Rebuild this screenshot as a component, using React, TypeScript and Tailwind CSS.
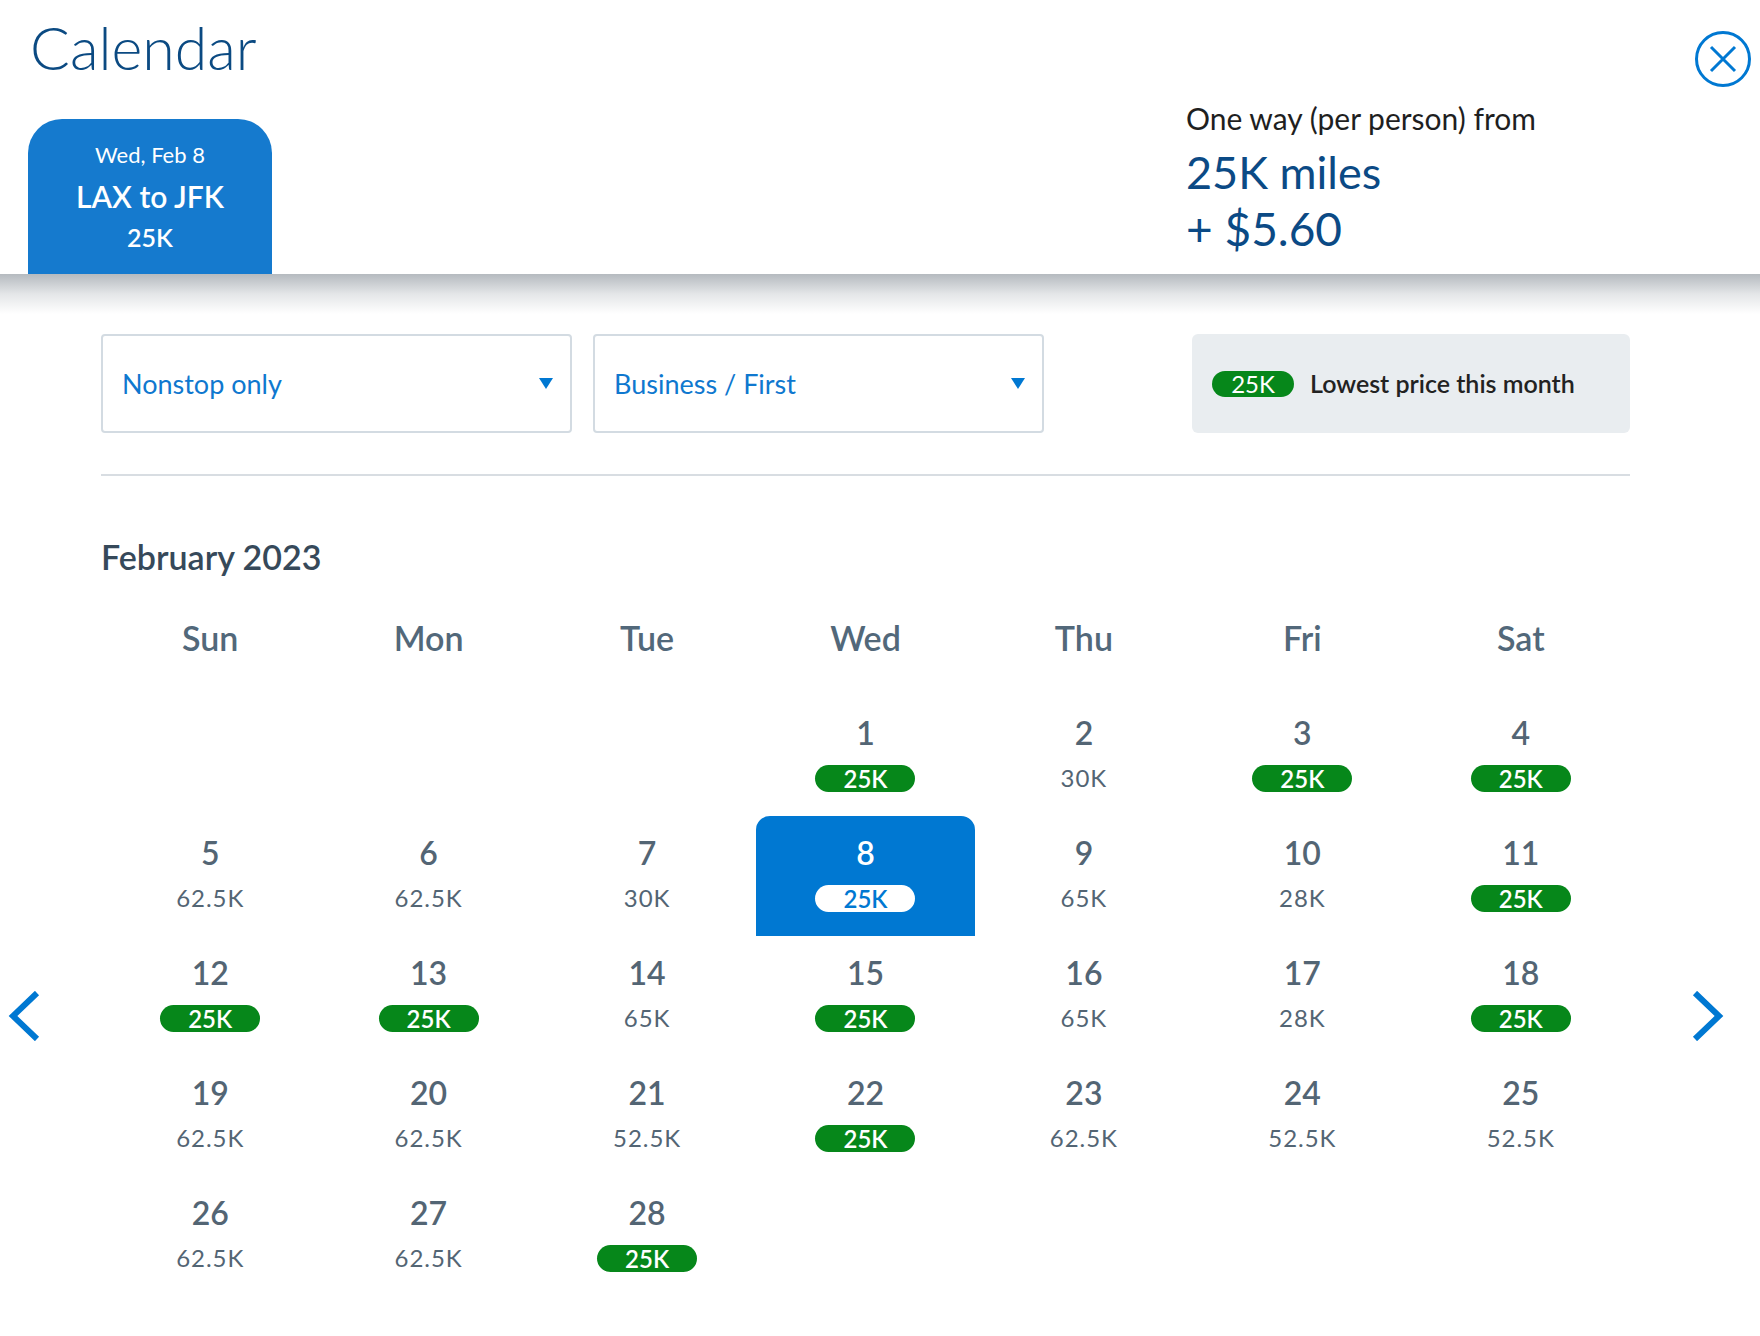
import React from "react"

type Day = { d: number; price: string; low?: boolean; selected?: boolean } | null

const weekdays = ["Sun", "Mon", "Tue", "Wed", "Thu", "Fri", "Sat"]

const days: Day[] = [
  null,
  null,
  null,
  { d: 1, price: "25K", low: true },
  { d: 2, price: "30K" },
  { d: 3, price: "25K", low: true },
  { d: 4, price: "25K", low: true },
  { d: 5, price: "62.5K" },
  { d: 6, price: "62.5K" },
  { d: 7, price: "30K" },
  { d: 8, price: "25K", low: true, selected: true },
  { d: 9, price: "65K" },
  { d: 10, price: "28K" },
  { d: 11, price: "25K", low: true },
  { d: 12, price: "25K", low: true },
  { d: 13, price: "25K", low: true },
  { d: 14, price: "65K" },
  { d: 15, price: "25K", low: true },
  { d: 16, price: "65K" },
  { d: 17, price: "28K" },
  { d: 18, price: "25K", low: true },
  { d: 19, price: "62.5K" },
  { d: 20, price: "62.5K" },
  { d: 21, price: "52.5K" },
  { d: 22, price: "25K", low: true },
  { d: 23, price: "62.5K" },
  { d: 24, price: "52.5K" },
  { d: 25, price: "52.5K" },
  { d: 26, price: "62.5K" },
  { d: 27, price: "62.5K" },
  { d: 28, price: "25K", low: true },
]

function Caret() {
  return (
    <svg width="14" height="11" viewBox="0 0 14 11" className="shrink-0">
      <path d="M0 0H14L7 11Z" fill="#0078d2" />
    </svg>
  )
}

function Select({ label, width }: { label: string; width: string }) {
  return (
    <div
      className={`flex h-[99px] items-center justify-between rounded-[4px] border-2 border-[#d3dbe2] pl-[19px] pr-[17px] ${width}`}
    >
      <span className="text-[27px] leading-[34px] text-[#0f78cf]">{label}</span>
      <Caret />
    </div>
  )
}

function Chevron({ dir }: { dir: "left" | "right" }) {
  return (
    <svg width="32" height="50" viewBox="0 0 32 50" fill="none">
      <path
        d={dir === "left" ? "M29 2L5 25L29 48" : "M3 2L27 25L3 48"}
        stroke="#0078d2"
        strokeWidth="6"
      />
    </svg>
  )
}

function Cell({ day }: { day: Day }) {
  if (!day) return <div className="h-[120px]" />
  const sel = day.selected
  return (
    <div
      className={`flex h-[120px] flex-col items-center pt-[17px] ${sel ? "rounded-t-[14px] bg-[#0078d2]" : ""}`}
    >
      <span
        className={`text-[32px] leading-[40px] font-semibold ${sel ? "text-white" : "text-[#536574]"}`}
      >
        {day.d}
      </span>
      {day.low ? (
        <span
          className={`mt-[12px] flex h-[27px] w-[100px] items-center justify-center rounded-full text-[24px] font-semibold leading-none ${
            sel ? "bg-white text-[#0078d2]" : "bg-[#06871a] text-white"
          }`}
        >
          {day.price}
        </span>
      ) : (
        <span className="mt-[11px] flex h-[27px] items-center text-[24px] tracking-[0.04em] text-[#536574]">
          {day.price}
        </span>
      )}
    </div>
  )
}

export default function App() {
  return (
    <div className="h-[1336px] w-[1760px] overflow-hidden bg-white font-['Lato',sans-serif]">
      {/* Header */}
      <header className="flex h-[274px]">
        <div className="flex flex-col pl-[28px] pt-[18px]">
          <h1 className="pl-[2px] text-[59px] font-light leading-[60px] text-[#0b4a82]">Calendar</h1>
          <div className="mt-[41px] flex h-[155px] w-[244px] flex-col items-center rounded-t-[34px] bg-[#157ace] pt-[22px] text-white">
            <span className="text-[22px] leading-[28px]">Wed, Feb 8</span>
            <span className="mt-[9px] text-[30px] font-semibold leading-[36px]">LAX to JFK</span>
            <span className="mt-[8px] text-[25px] font-semibold leading-[30px]">25K</span>
          </div>
        </div>
        <div className="ml-auto flex w-[509px] flex-col pt-[101px]">
          <span className="text-[30px] leading-[34px] text-[#1f1f1f]">One way (per person) from</span>
          <span className="mt-[10px] text-[45px] leading-[54px] text-[#0b4a85]">25K miles</span>
          <span className="mt-[3px] text-[46px] leading-[54px] text-[#0b4a85]">+ $5.60</span>
        </div>
        <div className="mr-[9px] pt-[31px]">
          <button
            type="button"
            className="flex size-[56px] items-center justify-center rounded-full border-[3px] border-[#0078d2]"
          >
            <svg width="28" height="28" viewBox="0 0 28 28">
              <path d="M2 2L26 26M26 2L2 26" stroke="#0078d2" strokeWidth="3" />
            </svg>
          </button>
        </div>
      </header>
      <div className="h-[40px] bg-gradient-to-b from-[#b5babf] via-[#e4e6e8] to-white" />

      {/* Main */}
      <div className="mt-[20px] flex">
        <div className="w-[101px] pl-[8px] pt-[657px]">
          <Chevron dir="left" />
        </div>

        <div className="w-[1529px]">
          <div className="flex items-center">
            <Select label="Nonstop only" width="w-[471px]" />
            <div className="ml-[21px]">
              <Select label="Business / First" width="w-[451px]" />
            </div>
            <div className="ml-auto flex h-[99px] w-[438px] items-center rounded-[6px] bg-[#e9edf0] pl-[20px]">
              <span className="flex h-[26px] w-[82px] items-center justify-center rounded-full bg-[#06871a] text-[24px] leading-none text-white">
                25K
              </span>
              <span className="ml-[16px] text-[25px] font-semibold text-[#222222]">
                Lowest price this month
              </span>
            </div>
          </div>

          <div className="mt-[41px] border-t-2 border-[#d8dde2]" />

          <h2 className="mt-[61px] text-[34px] font-semibold leading-[40px] text-[#36495a]">
            February 2023
          </h2>

          <div className="mt-[41px] grid grid-cols-7">
            {weekdays.map((w) => (
              <span key={w} className="text-center text-[34px] font-semibold leading-[40px] text-[#52687a]">
                {w}
              </span>
            ))}
          </div>

          <div className="mt-[38px] grid grid-cols-7">
            {days.map((day, i) => (
              <Cell key={i} day={day} />
            ))}
          </div>
        </div>

        <div className="flex-1 pl-[62px] pt-[657px]">
          <Chevron dir="right" />
        </div>
      </div>
    </div>
  )
}
